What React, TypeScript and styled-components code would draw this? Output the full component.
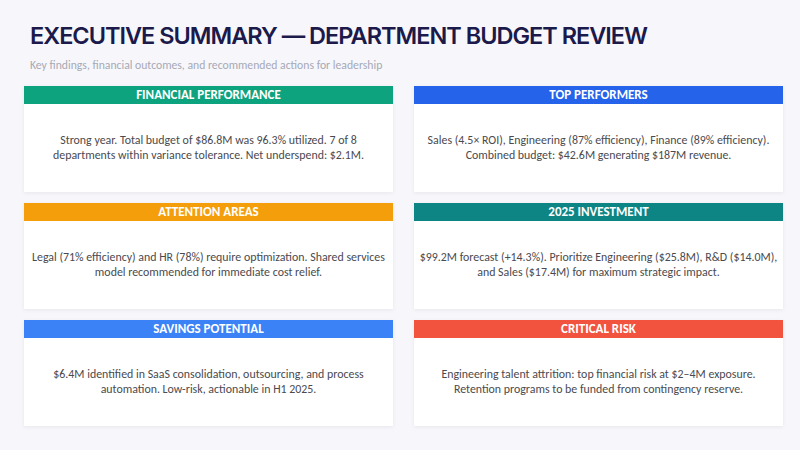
import { Fragment } from 'react';
import styled, { createGlobalStyle } from 'styled-components';

const GlobalStyle = createGlobalStyle`
  html, body {
    margin: 0;
    padding: 0;
    background: #f7f7fb;
  }
  * {
    box-sizing: border-box;
  }
`;

const Page = styled.div`
  width: 800px;
  height: 450px;
  padding: 20px 17px 0 24px;
  background: #f7f7fb;
  overflow: hidden;
`;

const Title = styled.h1`
  margin: 0 0 0 6px;
  font-family: Inter, 'Liberation Sans', sans-serif;
  font-weight: 600;
  font-size: 23.5px;
  line-height: 32px;
  color: #1b1a4b;
  letter-spacing: -1px;
`;

const Subtitle = styled.p`
  margin: 6px 0 0 6px;
  font-family: Carlito, Lato, 'Open Sans', sans-serif;
  font-size: 11.7px;
  line-height: 14px;
  color: #a6a9b6;
`;

const Grid = styled.div`
  margin-top: 14px;
  display: grid;
  grid-template-columns: 1fr 1fr;
  grid-auto-rows: 106px;
  column-gap: 21px;
  row-gap: 11px;
`;

const Card = styled.section`
  display: flex;
  flex-direction: column;
  background: #ffffff;
  box-shadow: 0 1px 4px rgba(30, 30, 70, 0.08);
`;

const CardHeader = styled.div<{ $color: string }>`
  height: 18px;
  background: ${(p) => p.$color};
  color: #ffffff;
  font-family: Carlito, Lato, 'Open Sans', sans-serif;
  font-weight: 700;
  font-size: 13px;
  line-height: 18px;
  text-align: center;
`;

const CardBody = styled.p`
  flex: 1;
  display: flex;
  flex-direction: column;
  align-items: center;
  justify-content: center;
  margin: 0;
  padding: 0 4px 1px;
  font-family: Carlito, Lato, 'Open Sans', sans-serif;
  font-size: 11.9px;
  line-height: 15px;
  color: #4a4a4f;
  text-align: center;
`;

const Line = styled.span`
  white-space: nowrap;
`;

const items = [
  {
    title: 'FINANCIAL PERFORMANCE',
    color: '#0ea37f',
    lines: [
      'Strong year. Total budget of $86.8M was 96.3% utilized. 7 of 8',
      'departments within variance tolerance. Net underspend: $2.1M.',
    ],
  },
  {
    title: 'TOP PERFORMERS',
    color: '#2563eb',
    lines: [
      'Sales (4.5× ROI), Engineering (87% efficiency), Finance (89% efficiency).',
      'Combined budget: $42.6M generating $187M revenue.',
    ],
  },
  {
    title: 'ATTENTION AREAS',
    color: '#f59e0b',
    lines: [
      'Legal (71% efficiency) and HR (78%) require optimization. Shared services',
      'model recommended for immediate cost relief.',
    ],
  },
  {
    title: '2025 INVESTMENT',
    color: '#0d8585',
    lines: [
      '$99.2M forecast (+14.3%). Prioritize Engineering ($25.8M), R&D ($14.0M),',
      'and Sales ($17.4M) for maximum strategic impact.',
    ],
  },
  {
    title: 'SAVINGS POTENTIAL',
    color: '#3b82f6',
    lines: [
      '$6.4M identified in SaaS consolidation, outsourcing, and process',
      'automation. Low-risk, actionable in H1 2025.',
    ],
  },
  {
    title: 'CRITICAL RISK',
    color: '#f2533f',
    lines: [
      'Engineering talent attrition: top financial risk at $2–4M exposure.',
      'Retention programs to be funded from contingency reserve.',
    ],
  },
];

function App() {
  return (
    <>
      <GlobalStyle />
      <Page>
        <Title>EXECUTIVE SUMMARY — DEPARTMENT BUDGET REVIEW</Title>
        <Subtitle>Key findings, financial outcomes, and recommended actions for leadership</Subtitle>
        <Grid>
          {items.map((item) => (
            <Card key={item.title}>
              <CardHeader $color={item.color}>{item.title}</CardHeader>
              <CardBody>
                {item.lines.map((line) => (
                  <Fragment key={line}>
                    <Line>{line}</Line>
                  </Fragment>
                ))}
              </CardBody>
            </Card>
          ))}
        </Grid>
      </Page>
    </>
  );
}

export default App;
